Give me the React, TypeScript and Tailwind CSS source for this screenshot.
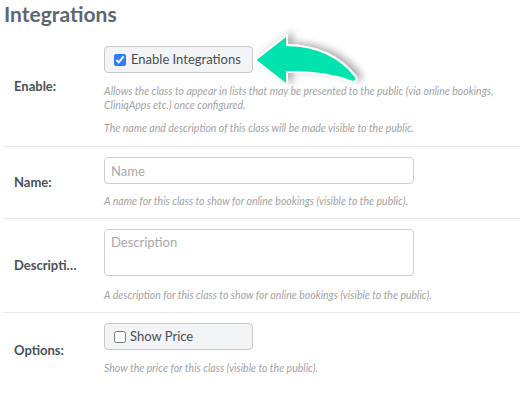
import React from "react";

function Arrow() {
  return (
    <svg
      className="absolute left-[240px] top-[25px] pointer-events-none"
      width="140"
      height="75"
      viewBox="0 0 140 75"
    >
      <defs>
        <filter id="sh" x="-20%" y="-40%" width="160%" height="180%">
          <feDropShadow dx="5" dy="-2" stdDeviation="3.5" floodColor="#000" floodOpacity="0.3" />
        </filter>
      </defs>
      <path
        d="M15 35 L47 10 L47 20 Q92 21 116 52 Q118 56 113 57 Q85 46 47 47 L47 60 Z"
        fill="#00e3ae"
        stroke="#ffffff"
        strokeWidth="2"
        strokeLinejoin="round"
        filter="url(#sh)"
      />
    </svg>
  );
}

function Row({ label, children, last }: { label: string; children: React.ReactNode; last?: boolean }) {
  return (
    <div className={`flex items-center ${last ? "" : "border-b border-[#e6e6e6]"}`}>
      <div className="w-[100px] shrink-0 pl-[10px] text-[13px] font-bold text-[#4b5157]">{label}</div>
      <div className="flex-1">{children}</div>
    </div>
  );
}

const help = "text-[10.5px] italic text-[#a3a3a3] leading-[14px]";

export default function App() {
  return (
    <div className="relative w-[526px] h-[400px] bg-white overflow-hidden px-[4px]" style={{ fontFamily: "Lato, 'Open Sans', sans-serif" }}>
      <h1 className="text-[21px] font-bold text-[#5d6770] leading-[26px] pt-[1px]">Integrations</h1>
      <div className="mr-[2px]">
        <Row label="Enable:">
          <div className="pt-[19px] pb-[11px]">
            <label className="inline-flex items-center gap-[5px] h-[27px] w-[149px] pl-[9px] rounded-[4px] border border-[#c9c9c9] bg-[#f3f4f5] text-[13px] text-[#494e53] align-top">
              <input type="checkbox" defaultChecked className="w-[12px] h-[12px] accent-[#2f7df6] m-0" />
              Enable Integrations
            </label>
            <p className={`${help} mt-[11px]`}>
              Allows the class to appear in lists that may be presented to the public (via online bookings, CliniqApps etc.) once configured.
            </p>
            <p className={`${help} mt-[9px]`}>The name and description of this class will be made visible to the public.</p>
          </div>
        </Row>
        <Row label="Name:">
          <div className="pt-[10px] pb-[10px]">
            <input
              placeholder="Name"
              className="block w-[310px] h-[27px] rounded-[4px] border border-[#cfcfcf] px-[6px] text-[13px] placeholder:text-[#a9a9a9] outline-none"
            />
            <p className={`${help} mt-[10px]`}>A name for this class to show for online bookings (visible to the public).</p>
          </div>
        </Row>
        <Row label="Descripti…">
          <div className="pt-[10px] pb-[10px]">
            <textarea
              placeholder="Description"
              className="block w-[310px] h-[47px] rounded-[4px] border border-[#cfcfcf] px-[6px] py-[3px] text-[13px] placeholder:text-[#a9a9a9] outline-none resize-none"
            />
            <p className={`${help} mt-[12px]`}>A description for this class to show for online bookings (visible to the public).</p>
          </div>
        </Row>
        <Row label="Options:" last>
          <div className="pt-[10px] pb-[14px]">
            <label className="inline-flex items-center gap-[4px] h-[27px] w-[149px] pl-[9px] rounded-[4px] border border-[#c9c9c9] bg-[#f3f4f5] text-[13px] text-[#494e53] align-top">
              <input type="checkbox" className="w-[12px] h-[12px] m-0" />
              Show Price
            </label>
            <p className={`${help} mt-[11px]`}>Show the price for this class (visible to the public).</p>
          </div>
        </Row>
      </div>
      <Arrow />
    </div>
  );
}
